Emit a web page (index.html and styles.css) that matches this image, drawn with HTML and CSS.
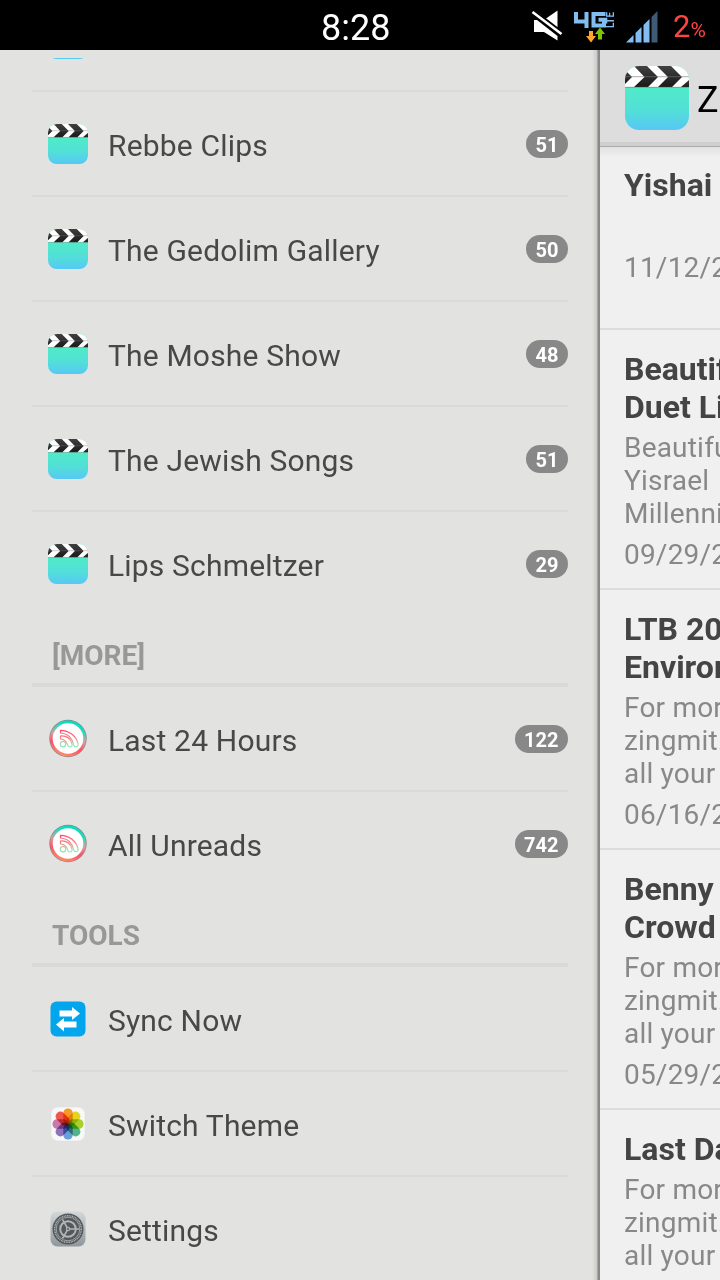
FILE: index.html
```html
<!DOCTYPE html>
<html lang="en">
<head>
    <meta charset="UTF-8">
    <meta name="viewport" content="width=device-width, initial-scale=1.0">
    <title>Feeds</title>
    <link rel="stylesheet" href="styles.css">
</head>
<body>
    <!-- shared icons -->
    <svg class="defs" width="0" height="0">
        <defs>
            <linearGradient id="clip-body" x1="0" y1="0" x2="0" y2="1">
                <stop offset="0.3" stop-color="#50ecc5"/>
                <stop offset="0.7" stop-color="#52dfd8"/>
                <stop offset="1" stop-color="#56c8f5"/>
            </linearGradient>
            <linearGradient id="clip-dark" x1="0" y1="0" x2="0" y2="1">
                <stop offset="0" stop-color="#414141"/>
                <stop offset="1" stop-color="#191919"/>
            </linearGradient>
            <clipPath id="clip-shape"><rect width="64" height="64" rx="14"/></clipPath>
            <linearGradient id="ring" x1="0.65" y1="0" x2="0.35" y2="1">
                <stop offset="0" stop-color="#00dcc0"/>
                <stop offset="0.22" stop-color="#20dcc0"/>
                <stop offset="0.48" stop-color="#e09a98"/>
                <stop offset="0.7" stop-color="#ff5068"/>
                <stop offset="1" stop-color="#ff9068"/>
            </linearGradient>
            <linearGradient id="wave" gradientUnits="userSpaceOnUse" x1="22" y1="11" x2="22" y2="28">
                <stop offset="0" stop-color="#ff4a70"/>
                <stop offset="0.5" stop-color="#f08a88"/>
                <stop offset="0.8" stop-color="#a5deb0"/>
                <stop offset="1" stop-color="#80eab0"/>
            </linearGradient>
            <linearGradient id="gear-bg" x1="0" y1="0" x2="0" y2="1">
                <stop offset="0" stop-color="#d3d8da"/>
                <stop offset="1" stop-color="#8f979c"/>
            </linearGradient>
            <symbol id="clip" viewBox="0 0 64 64">
                <g clip-path="url(#clip-shape)">
                    <rect width="64" height="64" fill="url(#clip-body)"/>
                    <rect width="64" height="21" fill="#fff"/>
                    <g fill="url(#clip-dark)">
                        <path d="M0 4L7 11L0 18Z"/>
                        <path d="M9 0H22L33 11L23 21H9L19.500 11Z"/>
                        <path d="M32 0H46L57 11L47 21H33L43 11Z"/>
                        <path d="M56 21L64 14V21Z"/>
                    </g>
                    <path d="M0 10.700H64M0 21.300H64" stroke="#777" stroke-opacity="0.6"/>
                </g>
            </symbol>
            <symbol id="rss" viewBox="0 0 40 40">
                <circle cx="20" cy="19.500" r="18.700" fill="#888"/>
                <circle cx="20" cy="19.500" r="18" fill="url(#ring)"/>
                <circle cx="20" cy="19.500" r="15.300" fill="#fff"/>
                <g fill="none" stroke="url(#wave)" stroke-width="1.200" transform="translate(0 0.500)">
                    <circle cx="15" cy="24.700" r="2.700"/>
                    <path d="M12.500 16.500V19.500Q18 20 19.500 25Q20 27.500 22 27.500Q24.500 27.500 24 24.500C22.500 19 18 16.200 12.500 16.500Z"/>
                    <path d="M12.500 10.800V13.500C20 14 24.500 19 25.500 25Q26 27.500 28.300 27.200Q30.500 27 30 24C28 16.500 21 10.800 12.500 10.800Z"/>
                </g>
            </symbol>
        </defs>
    </svg>

    <header class="status">
        <span class="clock">8:28</span>
        <svg class="status-icons" width="152" height="50" viewBox="528 0 152 50">
            <path d="M534 20V32H544L557.500 40.500V36L537 20Z" fill="#fff"/>
            <path d="M557.500 10.500V28L546 18.500Z" fill="#fff"/>
            <path d="M532.500 12L561.500 34" stroke="#000" stroke-width="6"/>
            <path d="M532.500 12L561.500 34" stroke="#fff" stroke-width="2.600"/>
            <g fill="none" stroke="#82bdf2" stroke-width="4">
                <path d="M576 12V21.500H588.500M586.500 12V28"/>
                <path d="M605.500 14H593.500V25.500H604V19.800H598.500"/>
            </g>
            <text class="lte" transform="translate(614 28) rotate(-90)" textLength="16" lengthAdjust="spacingAndGlyphs">LTE</text>
            <path d="M589 31H593V36H596L591 42.500L586 36H589Z" fill="#ffa42e"/>
            <path d="M598 39.500H602V34H605L600 27.500L595 34H598Z" fill="#7fc400"/>
            <g fill="#82bdf2">
                <path d="M626 42.500L633.500 35V42.500Z"/>
                <path d="M635.500 42.500V33L641.500 27V42.500Z"/>
                <path d="M643.500 42.500V25L649.500 19V42.500Z"/>
            </g>
            <path d="M651.500 42.500V17L657.500 11V42.500Z" fill="#3e5b76"/>
        </svg>
        <span class="battery">2<small>%</small></span>
    </header>

    <div class="screen">
        <nav class="menu">
            <div class="menu-list">
                <div class="row row-first">
                    <svg class="icon"><use href="#clip"/></svg>
                </div>
                <div class="row">
                    <svg class="icon"><use href="#clip"/></svg>
                    <span class="name">Rebbe Clips</span>
                    <span class="count">51</span>
                </div>
                <div class="row">
                    <svg class="icon"><use href="#clip"/></svg>
                    <span class="name">The Gedolim Gallery</span>
                    <span class="count">50</span>
                </div>
                <div class="row">
                    <svg class="icon"><use href="#clip"/></svg>
                    <span class="name">The Moshe Show</span>
                    <span class="count">48</span>
                </div>
                <div class="row">
                    <svg class="icon"><use href="#clip"/></svg>
                    <span class="name">The Jewish Songs</span>
                    <span class="count">51</span>
                </div>
                <div class="row row-last">
                    <svg class="icon"><use href="#clip"/></svg>
                    <span class="name">Lips Schmeltzer</span>
                    <span class="count">29</span>
                </div>

                <h2 class="section">[MORE]</h2>
                <div class="row">
                    <svg class="icon"><use href="#rss"/></svg>
                    <span class="name">Last 24 Hours</span>
                    <span class="count">122</span>
                </div>
                <div class="row row-last">
                    <svg class="icon"><use href="#rss"/></svg>
                    <span class="name">All Unreads</span>
                    <span class="count">742</span>
                </div>

                <h2 class="section">TOOLS</h2>
                <div class="row">
                    <svg class="icon" viewBox="0 0 40 40">
                        <rect x="2.500" y="2.500" width="35" height="35" rx="6" fill="#03a6ec"/>
                        <path d="M11.500 11.500H24V8L32 14.500L24 21V17.500H11.500ZM28.500 28.500H16V32.500L8 25.500L16 19V22.500H28.500Z" fill="#fff"/>
                    </svg>
                    <span class="name">Sync Now</span>
                </div>
                <div class="row">
                    <svg class="icon" viewBox="0 0 40 40">
                        <rect x="3" y="3" width="34" height="34" rx="7" fill="#f8f8f8" stroke="#ddd" stroke-width="0.500"/>
                        <g class="petals">
                            <rect x="15.300" y="4.500" width="9.400" height="15.500" rx="4.500" fill="#f59a23"/>
                            <rect x="15.300" y="4.500" width="9.400" height="15.500" rx="4.500" fill="#e3d51c" transform="rotate(45 20 20)"/>
                            <rect x="15.300" y="4.500" width="9.400" height="15.500" rx="4.500" fill="#a8d22b" transform="rotate(90 20 20)"/>
                            <rect x="15.300" y="4.500" width="9.400" height="15.500" rx="4.500" fill="#55b28a" transform="rotate(135 20 20)"/>
                            <rect x="15.300" y="4.500" width="9.400" height="15.500" rx="4.500" fill="#6b9fda" transform="rotate(180 20 20)"/>
                            <rect x="15.300" y="4.500" width="9.400" height="15.500" rx="4.500" fill="#8b74bd" transform="rotate(225 20 20)"/>
                            <rect x="15.300" y="4.500" width="9.400" height="15.500" rx="4.500" fill="#c879ad" transform="rotate(270 20 20)"/>
                            <rect x="15.300" y="4.500" width="9.400" height="15.500" rx="4.500" fill="#ee5749" transform="rotate(315 20 20)"/>
                        </g>
                    </svg>
                    <span class="name">Switch Theme</span>
                </div>
                <div class="row row-last">
                    <svg class="icon" viewBox="0 0 40 40">
                        <rect x="2.500" y="2.500" width="35" height="35" rx="7" fill="url(#gear-bg)"/>
                        <circle cx="20" cy="20" r="15.500" fill="#54585b"/>
                        <g fill="none" stroke="#b0b5b8">
                            <circle cx="20" cy="20" r="13.300" stroke-width="1.500" stroke-dasharray="1 0.700"/>
                            <circle cx="20" cy="20" r="11.800" stroke-width="0.800"/>
                            <circle cx="20" cy="20" r="7.800" stroke-width="2"/>
                            <path d="M20 20H31M20 20L14.500 10.500M20 20L14.500 29.500" stroke-width="1.500"/>
                        </g>
                        <circle cx="20" cy="20" r="2.200" fill="#b0b5b8"/>
                        <circle cx="20" cy="20" r="1" fill="#54585b"/>
                    </svg>
                    <span class="name">Settings</span>
                </div>
            </div>
        </nav>

        <main class="feed">
            <div class="feed-bar">
                <svg class="feed-icon"><use href="#clip"/></svg>
                <span class="feed-title">Z</span>
            </div>
            <article class="post post-short">
                <h3>Yishai</h3>
                <time>11/12/2</time>
            </article>
            <article class="post">
                <h3>Beautif<br>Duet Li</h3>
                <p>Beautifu<br>Yisrael<br>Millenni</p>
                <time>09/29/2</time>
            </article>
            <article class="post">
                <h3>LTB 20<br>Environ</h3>
                <p>For mor<br>zingmit.<br>all your</p>
                <time>06/16/2</time>
            </article>
            <article class="post">
                <h3>Benny<br>Crowd</h3>
                <p>For mor<br>zingmit.<br>all your</p>
                <time>05/29/2</time>
            </article>
            <article class="post">
                <h3>Last Da</h3>
                <p>For mor<br>zingmit.<br>all your</p>
            </article>
        </main>
    </div>
</body>
</html>
```
FILE: styles.css
```css
* {
    box-sizing: border-box;
}

body {
    margin: 0;
    width: 720px;
    height: 1280px;
    overflow: hidden;
    background: #e2e2e0;
    font-family: Roboto, sans-serif;
}

.defs {
    display: block;
}

svg {
    flex: none;
}

/* status bar */
.status {
    display: flex;
    height: 50px;
    background: #000;
    color: #fff;
}

.clock {
    width: 207px;
    margin-left: 321px;
    font-size: 36px;
    line-height: 56px;
}

.lte {
    font-family: Roboto, sans-serif;
    font-size: 10px;
    font-weight: bold;
    fill: #82bdf2;
}

.battery {
    margin-left: -7px;
    color: #ff4444;
    font-size: 31px;
    line-height: 53px;
    white-space: nowrap;
}

.battery small {
    font-size: 21px;
}

.screen {
    display: flex;
    height: 1230px;
}

/* side menu */
.menu {
    flex: none;
    width: 600px;
    height: 100%;
    padding: 8px 32px 0;
    background: linear-gradient(to right, rgba(0, 0, 0, 0) 592px, #c9c9c8 597px, #888 598px, #888 600px);
}

.menu-list {
    height: 100%;
    overflow: hidden;
}

.row {
    display: flex;
    align-items: center;
    height: 105px;
    padding-left: 16px;
    border-bottom: 2px solid #dadad9;
}

.row-first {
    margin-top: -71px;
}

.row-last {
    height: 103px;
    border-bottom: none;
}

.icon {
    width: 40px;
    height: 40px;
    margin-right: 20px;
}

.petals {
    isolation: isolate;
}

.petals rect {
    mix-blend-mode: multiply;
}

.name {
    flex: 1;
    padding-top: 4px;
    color: #484848;
    font-size: 30px;
    letter-spacing: 0.18px;
}

.count {
    height: 28px;
    padding: 0 9.5px;
    border-radius: 14px;
    background: #888;
    color: #fff;
    font-size: 20px;
    font-weight: bold;
    line-height: 30px;
}

.section {
    height: 72px;
    margin: 0;
    padding-left: 20px;
    border-bottom: 4px solid #d9d9d8;
    color: #989898;
    font-size: 28px;
    font-weight: 700;
    line-height: 82px;
}

/* feed */
.feed {
    width: 120px;
    height: 100%;
    overflow: hidden;
    background: #f0f0f0;
    white-space: nowrap;
}

.feed-bar {
    display: flex;
    height: 97px;
    padding: 16px 0 0 25px;
    border-bottom: 1px solid #aaa;
    background: linear-gradient(#dddddd 92px, #cfcfcf 92px);
}

.feed-icon {
    width: 64px;
    height: 64px;
}

.feed-title {
    margin-left: 8px;
    color: #000;
    font-size: 36px;
    line-height: 68px;
}

.post {
    height: 260px;
    padding: 20px 0 0 24px;
    border-bottom: 2px solid #dcdcdc;
}

.post-short {
    height: 183px;
    padding-top: 19px;
    background: linear-gradient(#e2e2e2, #f0f0f0 10px);
}

.post h3 {
    margin: 0;
    color: #444;
    font-size: 32px;
    font-weight: 700;
    line-height: 38px;
}

.post p {
    margin: 5px 0 0;
    color: #888;
    font-size: 28px;
    letter-spacing: 0.2px;
    line-height: 33px;
}

.post time {
    display: block;
    margin-top: 8px;
    color: #888;
    font-size: 28px;
    letter-spacing: 0.2px;
    line-height: 33px;
}

.post-short time {
    margin-top: 47px;
}
```
